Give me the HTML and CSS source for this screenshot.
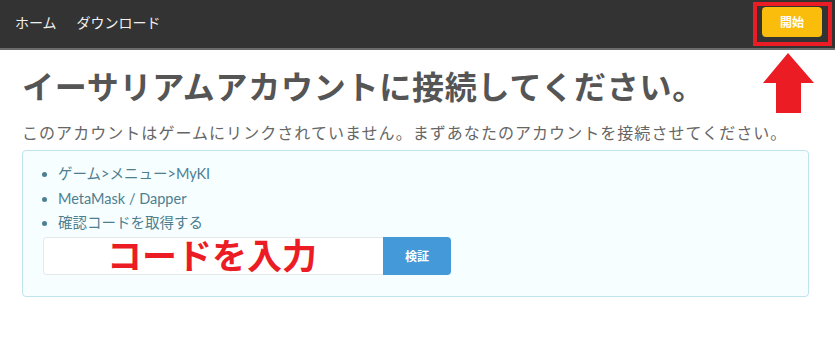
FILE: index.html
```html
<!DOCTYPE html>
<html lang="ja">
<head>
<meta charset="utf-8">
<link rel="stylesheet" href="styles.css">
</head>
<body>
<nav class="navbar">
  <div class="nav-links">
    <a class="nav-link" href="#">ホーム</a>
    <a class="nav-link" href="#">ダウンロード</a>
  </div>
  <button class="btn-start">開始</button>
</nav>
<main class="content">
  <h1 class="title">イーサリアムアカウントに接続してください。</h1>
  <p class="lead">このアカウントはゲームにリンクされていません。まずあなたのアカウントを接続させてください。</p>
  <div class="info-box">
    <ul class="steps">
      <li>ゲーム&gt;メニュー&gt;MyKI</li>
      <li>MetaMask / Dapper</li>
      <li>確認コードを取得する</li>
    </ul>
    <div class="input-group">
      <input class="code-input" type="text">
      <button class="btn-verify">検証</button>
      <span class="note-text">コードを入力</span>
    </div>
  </div>
</main>
<div class="note-frame"></div>
<svg class="note-arrow" width="52" height="61" viewBox="0 0 52 61">
  <polygon points="25,0 51,30 38,30 38,60 13,60 13,30 0,30" fill="#ec1c24"/>
</svg>
</body>
</html>
```
FILE: styles.css
```css
* { box-sizing: border-box; }
body {
  margin: 0;
  background: #fff;
  font-family: Lato, "Noto Sans CJK JP", sans-serif;
}
.navbar {
  height: 50px;
  background: #333;
  border-bottom: 2px solid #6b6b6b;
  display: flex;
  align-items: center;
  justify-content: space-between;
  padding: 0 13px 0 15px;
}
.nav-links {
  display: flex;
  gap: 20px;
  margin-top: -4px;
}
.nav-link {
  color: #f0f0f0;
  text-decoration: none;
  font-size: 14px;
}
.btn-start {
  width: 60px;
  height: 30px;
  margin-top: -5px;
  background: #fbbd0c;
  border: none;
  border-radius: 4px;
  color: #fff;
  font-weight: bold;
  font-size: 12px;
  font-family: Lato, "Noto Sans CJK JP", sans-serif;
}
.content {
  padding: 0 26px 0 22px;
}
.title {
  margin: 18px 0 0;
  font-size: 32px;
  line-height: 1.2;
  color: #555;
  font-weight: bold;
  letter-spacing: 0.75px;
}
.lead {
  margin: 16px 0 0;
  font-size: 16px;
  line-height: 22px;
  color: #666;
  letter-spacing: 1.05px;
}
.info-box {
  margin-top: 6px;
  border: 1px solid #bfe3ec;
  border-radius: 4px;
  background: #f6feff;
  padding: 11px 20px 21px;
}
.steps {
  margin: 0;
  padding-left: 15px;
  color: #4d7f91;
  font-size: 14.5px;
  line-height: 24.5px;
}
.input-group {
  position: relative;
  display: flex;
  margin-top: 1px;
  height: 38px;
}
.code-input {
  width: 340px;
  height: 38px;
  border: 1px solid #e4e8e8;
  border-right: none;
  border-radius: 4px 0 0 4px;
  background: #fff;
  margin: 0;
}
.btn-verify {
  width: 68px;
  height: 38px;
  border: none;
  border-radius: 0 4px 4px 0;
  background: #449ad9;
  color: #fff;
  font-weight: bold;
  font-size: 12px;
  font-family: Lato, "Noto Sans CJK JP", sans-serif;
}
.note-text {
  position: absolute;
  left: 64px;
  top: -2px;
  font-size: 35px;
  line-height: 40px;
  font-weight: bold;
  color: #ec1c24;
  letter-spacing: 0;
  pointer-events: none;
}
.note-frame {
  position: absolute;
  left: 753px;
  top: 2px;
  width: 79px;
  height: 44px;
  border: 4px solid #ec1c24;
}
.note-arrow {
  position: absolute;
  left: 763px;
  top: 53px;
}
```
